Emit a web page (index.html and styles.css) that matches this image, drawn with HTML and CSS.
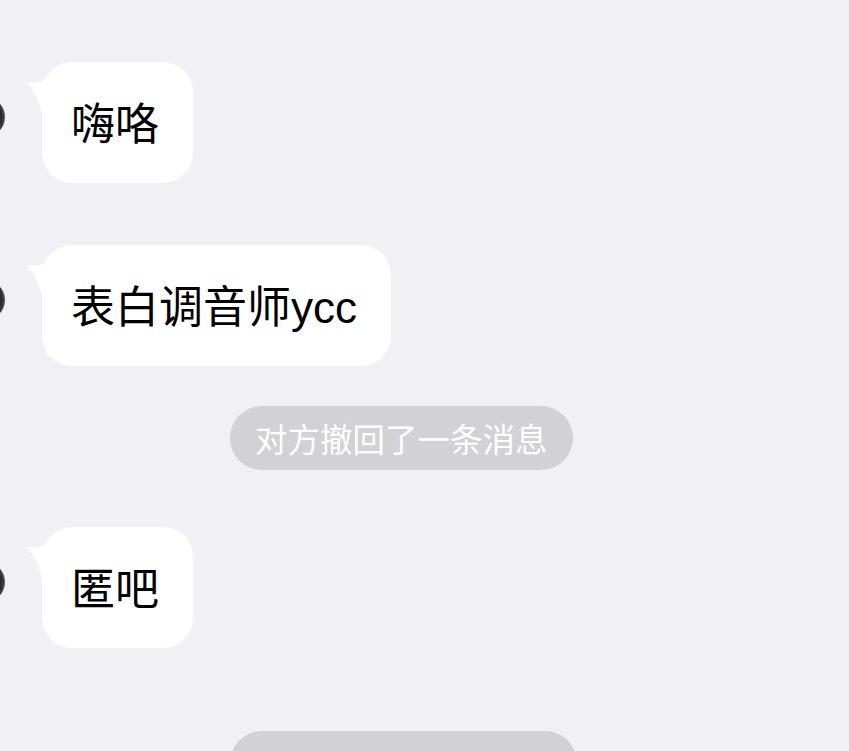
FILE: index.html
```html
<!DOCTYPE html>
<html lang="zh-CN">
<head>
<meta charset="utf-8">
<title>Chat</title>
<link rel="stylesheet" href="styles.css">
</head>
<body>
<div class="chat">
  <div class="msg msg-1">
    <div class="avatar"></div>
    <div class="bubble">
      <svg class="tail" viewBox="0 0 30 40" width="30" height="40"><path d="M2 6 Q14 8 26 2 L26 38 L18 38 Q14 18 2 6 Z" fill="#fff"/></svg>
      <span class="text">嗨咯</span>
    </div>
  </div>
  <div class="msg msg-2">
    <div class="avatar"></div>
    <div class="bubble">
      <svg class="tail" viewBox="0 0 30 40" width="30" height="40"><path d="M2 6 Q14 8 26 2 L26 38 L18 38 Q14 18 2 6 Z" fill="#fff"/></svg>
      <span class="text">表白调音师ycc</span>
    </div>
  </div>
  <div class="system sys-1"><span class="pill">对方撤回了一条消息</span></div>
  <div class="msg msg-3">
    <div class="avatar"></div>
    <div class="bubble">
      <svg class="tail" viewBox="0 0 30 40" width="30" height="40"><path d="M2 6 Q14 8 26 2 L26 38 L18 38 Q14 18 2 6 Z" fill="#fff"/></svg>
      <span class="text">匿吧</span>
    </div>
  </div>
  <div class="system sys-2"><span class="pill pill-empty"></span></div>
</div>
</body>
</html>
```

FILE: styles.css
```css
html, body {
  margin: 0;
  padding: 0;
}
body {
  background: #f0f0f5;
  font-family: "Noto Sans CJK SC", "Noto Sans", sans-serif;
  overflow: hidden;
  height: 751px;
}
.chat {
  display: flex;
  flex-direction: column;
  padding-top: 62px;
}
.msg {
  display: flex;
  align-items: flex-start;
  gap: 37px;
}
.msg-2 { margin-top: 62px; }
.msg-3 { margin-top: 57px; }
.avatar {
  width: 40px;
  height: 40px;
  margin-left: -35px;
  margin-top: 35px;
  border-radius: 50%;
  background: radial-gradient(circle at 40% 50%, #2a2a2c 65%, #a0a0a6 100%);
  flex: none;
}
.bubble {
  position: relative;
  background: #fff;
  border-radius: 30px;
  height: 121px;
  box-sizing: border-box;
  padding: 5px 34px 0 29px;
  display: flex;
  align-items: center;
}
.tail {
  position: absolute;
  left: -18px;
  top: 14px;
  display: block;
}
.text {
  position: relative;
  font-family: "Liberation Sans", "Noto Sans CJK SC", sans-serif;
  font-size: 44px;
  color: #000;
  line-height: 1;
  white-space: nowrap;
}
.system {
  display: flex;
  padding-left: 230px;
}
.sys-1 { margin-top: 40px; }
.sys-2 { margin-top: 83px; }
.pill {
  background: #d1d1d6;
  color: #fff;
  font-size: 32.5px;
  height: 64px;
  line-height: 64px;
  padding: 0 25px;
  border-radius: 32px;
  white-space: nowrap;
}
.pill-empty {
  width: 347px;
  padding: 0;
}
```
